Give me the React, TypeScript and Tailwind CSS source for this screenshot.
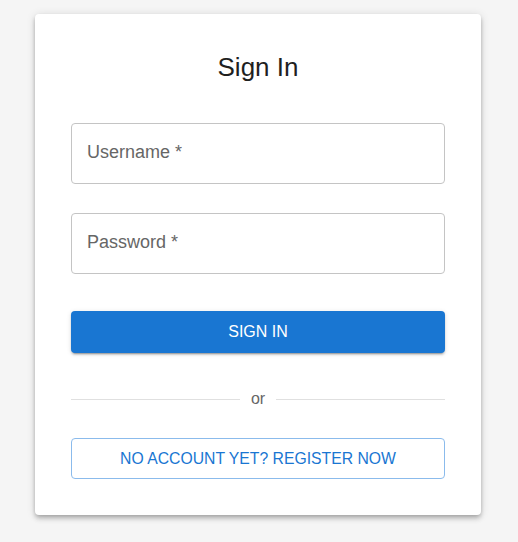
export default function App() {
  return (
    <div className="min-h-screen bg-[#f5f5f5] pt-[14px] font-['Liberation_Sans',Arial,sans-serif]">
      <div className="ml-[35px] w-[446px] rounded-[4px] bg-white px-[36px] pt-[37px] pb-[36px] shadow-[0_2px_4px_-1px_rgba(0,0,0,0.2),0_4px_5px_0_rgba(0,0,0,0.14),0_1px_10px_0_rgba(0,0,0,0.12)]">
        <h1 className="text-center text-[26px] leading-[32px] text-[#1f1f1f]">Sign In</h1>

        <form className="mt-[40px] flex flex-col" onSubmit={(e) => e.preventDefault()}>
          {/* Username */}
          <input
            type="text"
            placeholder="Username *"
            className="h-[61px] w-full rounded-[4px] border border-[#c4c4c4] pl-[15px] pb-[3px] text-[18px] text-[#222] outline-none placeholder:text-[#666]"
          />
          {/* Password */}
          <input
            type="password"
            placeholder="Password *"
            className="mt-[29px] h-[61px] w-full rounded-[4px] border border-[#c4c4c4] pl-[15px] pb-[3px] text-[18px] text-[#222] outline-none placeholder:text-[#666]"
          />

          <button
            type="submit"
            className="mt-[37px] h-[42px] w-full rounded-[4px] bg-[#1976d2] text-[16px] text-white shadow-[0_3px_1px_-2px_rgba(0,0,0,0.2),0_2px_2px_0_rgba(0,0,0,0.14),0_1px_5px_0_rgba(0,0,0,0.12)]"
          >
            SIGN IN
          </button>
        </form>

        {/* Divider */}
        <div className="mt-[36px] flex items-center gap-[11px]">
          <div className="h-px flex-1 bg-[#e0e0e0]" />
          <span className="text-[16px] leading-[20px] text-[#666]">or</span>
          <div className="h-px flex-1 bg-[#e0e0e0]" />
        </div>

        <button
          type="button"
          className="mt-[29px] h-[41px] w-full rounded-[4px] border border-[#8bbbec] text-[15.75px] text-[#1976d2]"
        >
          NO ACCOUNT YET? REGISTER NOW
        </button>
      </div>
    </div>
  );
}
